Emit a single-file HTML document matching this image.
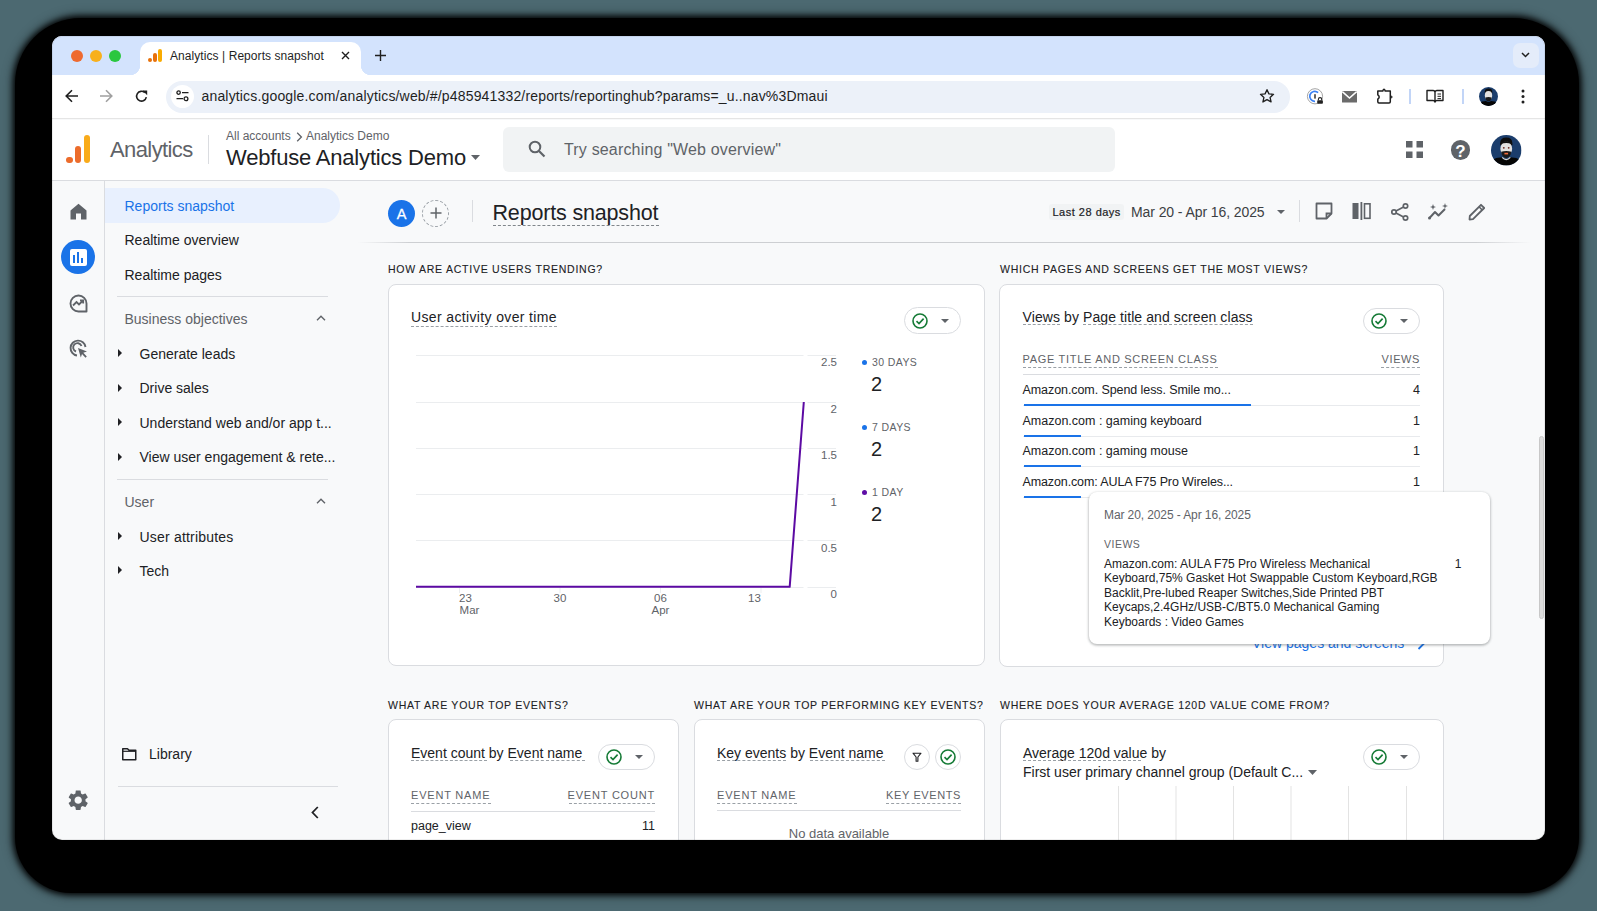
<!DOCTYPE html>
<html><head><meta charset="utf-8">
<style>
*{box-sizing:border-box;margin:0;padding:0}
html,body{width:1597px;height:911px;overflow:hidden;background:#4c6971;font-family:"Liberation Sans",sans-serif;color:#202124}
.a{position:absolute}
#shadow{position:absolute;left:15px;top:18px;width:1564px;height:874.5px;background:#000;border-radius:66px 66px 56px 56px;box-shadow:0 0 6px 2px #000,0 0 12px 3px rgba(0,0,0,.3)}
#win{position:absolute;left:0;top:0;width:1597px;height:911px;clip-path:inset(36px 52px 71px 52px round 10px);background:#f8f9fa}
.t{position:absolute;white-space:nowrap;line-height:1}
svg{position:absolute;overflow:visible}
</style></head><body>
<div id="shadow"></div>
<div id="win">
  <!-- ===== tab strip ===== -->
  <div class="a" style="left:52px;top:36px;width:1493px;height:39px;background:#d3e3fd"></div>
  <div class="a" style="left:71px;top:49.5px;width:12px;height:12px;border-radius:50%;background:#ee6a30"></div>
  <div class="a" style="left:90px;top:49.5px;width:12px;height:12px;border-radius:50%;background:#f8b01d"></div>
  <div class="a" style="left:109px;top:49.5px;width:12px;height:12px;border-radius:50%;background:#2ac73f"></div>
  <!-- active tab -->
  <div class="a" style="left:140px;top:42px;width:221px;height:34px;background:#fff;border-radius:10px 10px 0 0"></div>
  <div class="a" style="left:130px;top:64.5px;width:10px;height:10px;background:radial-gradient(circle at 0 0,#d3e3fd 10px,#fff 10.5px)"></div>
  <div class="a" style="left:361px;top:64.5px;width:10px;height:10px;background:radial-gradient(circle at 100% 0,#d3e3fd 10px,#fff 10.5px)"></div>
  <!-- favicon -->
  <div class="a" style="left:148px;top:58px;width:4px;height:4px;border-radius:50%;background:#e8710a"></div>
  <div class="a" style="left:152.5px;top:53px;width:4px;height:9px;border-radius:2px;background:#e8710a"></div>
  <div class="a" style="left:157.5px;top:48.5px;width:4px;height:13.5px;border-radius:2px;background:#f9ab00"></div>
  <div class="t" style="left:170px;top:50px;font-size:12px;letter-spacing:0.07px;color:#1f1f1f">Analytics | Reports snapshot</div>
  <svg style="left:341px;top:51px" width="9" height="9" viewBox="0 0 9 9"><path d="M1 1L8 8M8 1L1 8" stroke="#1f1f1f" stroke-width="1.4"/></svg>
  <svg style="left:374.5px;top:49.5px" width="11" height="11" viewBox="0 0 11 11"><path d="M5.5 0V11M0 5.5H11" stroke="#1f1f1f" stroke-width="1.4"/></svg>
  <div class="a" style="left:1512.5px;top:43px;width:26px;height:25px;border-radius:7px;background:#e4ecfa"></div>
  <svg style="left:1521px;top:52px" width="9" height="6" viewBox="0 0 9 6"><path d="M1 1L4.5 4.5L8 1" stroke="#1f1f1f" stroke-width="1.5" fill="none"/></svg>

  <!-- ===== toolbar ===== -->
  <div class="a" style="left:52px;top:75px;width:1493px;height:44px;background:#fff;border-bottom:1px solid #e5e5e5"></div>
  <!-- back -->
  <svg style="left:65px;top:89px" width="14" height="14" viewBox="0 0 14 14"><path d="M13 7H1.5M7 1.2L1.2 7L7 12.8" stroke="#1f1f1f" stroke-width="1.6" fill="none"/></svg>
  <svg style="left:99px;top:89px" width="14" height="14" viewBox="0 0 14 14"><path d="M1 7H12.5M7 1.2L12.8 7L7 12.8" stroke="#a0a0a0" stroke-width="1.6" fill="none"/></svg>
  <svg style="left:135px;top:90px" width="13" height="13" viewBox="0 0 13 13"><path d="M11.3 7.2A4.9 4.9 0 1 1 9.8 2.6" stroke="#1f1f1f" stroke-width="1.6" fill="none"/><path d="M7.6 0.6L12.2 0.6L12.2 5.2Z" fill="#1f1f1f"/></svg>
  <!-- omnibox -->
  <div class="a" style="left:166px;top:81px;width:1124px;height:31.5px;border-radius:16px;background:#ecf1f9"></div>
  <div class="a" style="left:170.5px;top:85px;width:23px;height:23px;border-radius:50%;background:#fff"></div>
  <svg style="left:176px;top:90px" width="13" height="12" viewBox="0 0 13 12"><circle cx="2.6" cy="2.6" r="1.7" stroke="#1f1f1f" stroke-width="1.3" fill="none"/><path d="M6 2.6H12.5M0.5 8.6H7" stroke="#1f1f1f" stroke-width="1.3"/><circle cx="10" cy="8.8" r="1.9" stroke="#1f1f1f" stroke-width="1.3" fill="none"/></svg>
  <div class="t" style="left:201.5px;top:89px;font-size:14px;letter-spacing:0.165px;color:#1f1f1f">analytics.google.com/analytics/web/#/p485941332/reports/reportinghub?params=_u..nav%3Dmaui</div>
  <!-- star -->
  <svg style="left:1259px;top:88px" width="16" height="16" viewBox="0 0 24 24"><path d="M12 2.5l2.9 6.3 6.9.7-5.2 4.6 1.5 6.8L12 17.4l-6.1 3.5 1.5-6.8L2.2 9.5l6.9-.7z" stroke="#1f1f1f" stroke-width="2" fill="none" stroke-linejoin="round"/></svg>
  <!-- ext icons -->
  <svg style="left:1306px;top:87px" width="20" height="20" viewBox="0 0 20 20"><circle cx="9" cy="9.3" r="7.6" stroke="#9a9a9a" stroke-width="0.9" fill="none"/><path d="M12.1 5.6A5 5 0 1 0 9 14.3" stroke="#3b82f6" stroke-width="1.7" fill="none"/><rect x="8.3" y="7.2" width="1.4" height="4.4" fill="#222"/><rect x="11.2" y="13.2" width="5.7" height="3.6" rx="0.8" fill="#222"/><path d="M12.4 13.3V12.3a1.65 1.65 0 0 1 3.3 0v1" stroke="#222" stroke-width="1.1" fill="none"/></svg>
  <svg style="left:1342px;top:90.5px" width="15" height="11.5" viewBox="0 0 15 11.5"><rect x="0" y="0" width="15" height="11.5" rx="0.6" fill="#6b6b6b"/><path d="M0.3 0.6L7.5 7L14.7 0.6" stroke="#fff" stroke-width="1.5" fill="none"/></svg>
  <svg style="left:1376px;top:87.5px" width="18" height="16" viewBox="0 0 18 16"><path d="M1.8 3H6.8Q7.2 1.4 8 1.2Q8.8 1.4 9.2 3H14.3V13.8Q14.3 15 13.1 15H3Q1.8 15 1.8 13.8V11.2Q3.2 10.2 3.2 9Q3.2 7.8 1.8 6.8Z" stroke="#1f1f1f" stroke-width="1.5" fill="none" stroke-linejoin="round"/><path d="M15.1 7.3L16.8 9L15.1 10.7Z" fill="#1f1f1f"/></svg>
  <div class="a" style="left:1409px;top:89px;width:1.5px;height:15px;background:#c2d5f7"></div>
  <svg style="left:1426px;top:89px" width="18" height="14" viewBox="0 0 18 14"><path d="M1 1.5H7a2 2 0 0 1 2 2V13a2 2 0 0 0-2-1.5H1ZM17 1.5H11a2 2 0 0 0-2 2V13a2 2 0 0 1 2-1.5H17Z" stroke="#1f1f1f" stroke-width="1.4" fill="none" stroke-linejoin="round"/><path d="M11.5 5H15M11.5 7.3H15M11.5 9.6H15" stroke="#1f1f1f" stroke-width="1"/></svg>
  <div class="a" style="left:1462px;top:89px;width:1.5px;height:15px;background:#c2d5f7"></div>
  <svg style="left:1479px;top:87px" width="19" height="19" viewBox="0 0 30 30"><defs><clipPath id="av2"><circle cx="15" cy="15" r="15"/></clipPath></defs><g clip-path="url(#av2)"><rect width="30" height="30" fill="#1b3d6c"/><path d="M9 8Q9 2.5 15 2.5Q21 2.5 21 8V10H9Z" fill="#0d0d0d"/><ellipse cx="15" cy="13.5" rx="5.8" ry="7" fill="#e4e2e0"/><path d="M10 16.5Q15 15 20 16.5Q19.5 22 15 22.5Q10.5 22 10 16.5Z" fill="#1a1a1a"/><path d="M0 25Q5 22 11 22Q15 25.5 19 22Q25 22 30 25V30H0Z" fill="#050505"/></g></svg>
  <svg style="left:1521px;top:89px" width="4" height="15" viewBox="0 0 4 15"><circle cx="2" cy="2" r="1.5" fill="#1f1f1f"/><circle cx="2" cy="7.5" r="1.5" fill="#1f1f1f"/><circle cx="2" cy="13" r="1.5" fill="#1f1f1f"/></svg>

  <!-- ===== GA header ===== -->
  <div class="a" style="left:52px;top:120px;width:1493px;height:61px;background:#fff;border-bottom:1px solid #dadce0"></div>

  <!-- GA logo -->
  <div class="a" style="left:66.2px;top:156.6px;width:6.8px;height:6.8px;border-radius:50%;background:#ec6c2b"></div>
  <div class="a" style="left:75px;top:146px;width:6.4px;height:17.2px;border-radius:3.2px;background:#ec6c2b"></div>
  <div class="a" style="left:83.9px;top:135px;width:6.5px;height:28.2px;border-radius:3.25px;background:#f9ab1a"></div>
  <div class="t" style="left:110px;top:139px;font-size:22px;letter-spacing:-0.6px;color:#5f6368">Analytics</div>
  <div class="a" style="left:208px;top:135px;width:1px;height:29px;background:#dadce0"></div>
  <div class="t" style="left:226px;top:129.5px;font-size:12px;color:#5f6368">All accounts</div>
  <svg style="left:296px;top:132px" width="7" height="10" viewBox="0 0 7 10"><path d="M1.2 0.8L5.4 5L1.2 9.2" stroke="#5f6368" stroke-width="1.3" fill="none"/></svg>
  <div class="t" style="left:306px;top:129.5px;font-size:12px;color:#5f6368">Analytics Demo</div>
  <div class="t" style="left:226px;top:146.8px;font-size:22px;letter-spacing:-0.19px;color:#202124">Webfuse Analytics Demo</div>
  <svg style="left:470.5px;top:155px" width="9" height="5" viewBox="0 0 9 5"><path d="M0 0H9L4.5 5Z" fill="#5f6368"/></svg>
  <!-- search -->
  <div class="a" style="left:503px;top:127px;width:612px;height:45px;border-radius:6px;background:#f1f3f4"></div>
  <svg style="left:528px;top:140px" width="18" height="18" viewBox="0 0 18 18"><circle cx="7" cy="7" r="5.3" stroke="#5f6368" stroke-width="2" fill="none"/><path d="M11 11L16.5 16.5" stroke="#5f6368" stroke-width="2.2"/></svg>
  <div class="t" style="left:564px;top:141.5px;font-size:16px;letter-spacing:0.17px;color:#5f6368">Try searching "Web overview"</div>
  <!-- apps -->
  <svg style="left:1406px;top:141px" width="17" height="17" viewBox="0 0 17 17"><rect x="0" y="0" width="6.5" height="6.5" fill="#5f6368"/><rect x="10.5" y="0" width="6.5" height="6.5" fill="#5f6368"/><rect x="0" y="10.5" width="6.5" height="6.5" fill="#5f6368"/><rect x="10.5" y="10.5" width="6.5" height="6.5" fill="#5f6368"/></svg>
  <div class="a" style="left:1450.5px;top:140px;width:19.5px;height:19.5px;border-radius:50%;background:#5f6368"></div>
  <div class="t" style="left:1453.5px;top:142.5px;font-size:17px;font-weight:bold;color:#fff;width:14px;text-align:center">?</div>
  <svg style="left:1491px;top:134.5px" width="30.5" height="30.5" viewBox="0 0 30 30"><defs><clipPath id="av"><circle cx="15" cy="15" r="15"/></clipPath></defs><g clip-path="url(#av)"><rect width="30" height="30" fill="#1b3d6c"/><path d="M9 8Q9 2.5 15 2.5Q21 2.5 21 8V10H9Z" fill="#0d0d0d"/><ellipse cx="15" cy="13.5" rx="5.8" ry="7" fill="#e4e2e0"/><path d="M9.5 9Q15 6.5 20.5 9V7.5Q15 4.5 9.5 7.5Z" fill="#111"/><circle cx="12.6" cy="12.6" r="0.9" fill="#6b2a20"/><circle cx="17.4" cy="12.6" r="0.9" fill="#6b2a20"/><path d="M10 16.5Q15 15 20 16.5Q19.5 22 15 22.5Q10.5 22 10 16.5Z" fill="#1a1a1a"/><rect x="13.2" y="17.5" width="3.6" height="1.6" fill="#f26b3a"/><path d="M0 25Q5 22 11 22Q15 25.5 19 22Q25 22 30 25V30H0Z" fill="#050505"/><path d="M11 22Q15 26.5 19 22" stroke="#d8d8d8" stroke-width="1.2" fill="none"/></g></svg>

  <!-- ===== left rail ===== -->
  <div class="a" style="left:104px;top:181px;width:1px;height:660px;background:#dadce0"></div>
  <svg style="left:69.5px;top:203px" width="17" height="17" viewBox="0 0 17 17"><path d="M0.5 7.5L8.5 0.8L16.5 7.5V16.5H11V10.5H6V16.5H0.5Z" fill="#5f6368"/></svg>
  <div class="a" style="left:60.5px;top:240px;width:34px;height:34px;border-radius:50%;background:#1a73e8"></div>
  <div class="a" style="left:69.5px;top:248.5px;width:17px;height:17px;border-radius:2px;background:#fff"></div>
  <div class="a" style="left:72.5px;top:255px;width:2px;height:7.5px;background:#1a73e8"></div>
  <div class="a" style="left:76.5px;top:252px;width:2px;height:10.5px;background:#1a73e8"></div>
  <div class="a" style="left:80.5px;top:257.5px;width:2px;height:5px;background:#1a73e8"></div>
  <svg style="left:68.5px;top:293.5px" width="19" height="19" viewBox="0 0 19 19"><path d="M17.5 9.5A8 8 0 1 0 9.5 17.5H17.5Z" stroke="#5f6368" stroke-width="1.9" fill="none" stroke-linejoin="round"/><path d="M4 11.5L7.5 8L10 10.5L14 6.5M11 6.3H14.2V9.5" stroke="#5f6368" stroke-width="1.8" fill="none"/></svg>
  <svg style="left:68.5px;top:339px" width="19" height="19" viewBox="0 0 19 19"><path d="M16.5 8A7.5 7.5 0 1 0 8 16.5" stroke="#5f6368" stroke-width="1.9" fill="none"/><path d="M12.5 7A4.3 4.3 0 1 0 7 12.5" stroke="#5f6368" stroke-width="1.9" fill="none"/><path d="M9 9L18 12.5L14.3 13.8L17.8 17.6L16.5 18.8L13 15L11.8 18.5Z" fill="#5f6368"/></svg>
  <svg style="left:66.1px;top:787.6px" width="24.4" height="24.4" viewBox="0 0 24 24"><path fill="#5f6368" d="M19.14 12.94c.04-.3.06-.61.06-.94 0-.32-.02-.64-.07-.94l2.03-1.58a.49.49 0 0 0 .12-.61l-1.92-3.32a.488.488 0 0 0-.59-.22l-2.39.96c-.5-.38-1.03-.7-1.62-.94l-.36-2.54a.484.484 0 0 0-.48-.41h-3.84c-.24 0-.43.17-.47.41l-.36 2.54c-.59.24-1.13.57-1.62.94l-2.39-.96c-.22-.08-.47 0-.59.22L2.74 8.87c-.12.21-.08.47.12.61l2.03 1.58c-.05.3-.09.63-.09.94s.02.64.07.94l-2.03 1.58a.49.49 0 0 0-.12.61l1.92 3.32c.12.22.37.29.59.22l2.39-.96c.5.38 1.03.7 1.62.94l.36 2.54c.05.24.24.41.48.41h3.84c.24 0 .44-.17.47-.41l.36-2.54c.59-.24 1.13-.56 1.62-.94l2.39.96c.22.08.47 0 .59-.22l1.92-3.32c.12-.22.07-.47-.12-.61l-2.01-1.58zM12 15.6c-1.98 0-3.6-1.62-3.6-3.6s1.62-3.6 3.6-3.6 3.6 1.62 3.6 3.6-1.62 3.6-3.6 3.6z"/></svg>

  <!-- ===== nav ===== -->
  <div class="a" style="left:105px;top:188px;width:235px;height:34.6px;border-radius:0 17.3px 17.3px 0;background:#e8f0fe"></div>
  <div class="t" style="left:124.5px;top:198.5px;font-size:14px;color:#1a73e8">Reports snapshot</div>
  <div class="t" style="left:124.5px;top:233px;font-size:14px;color:#202124">Realtime overview</div>
  <div class="t" style="left:124.5px;top:267.5px;font-size:14px;color:#202124">Realtime pages</div>
  <div class="a" style="left:117px;top:296px;width:211px;height:1px;background:#dadce0"></div>
  <div class="t" style="left:124.5px;top:312px;font-size:14px;color:#5f6368">Business objectives</div>
  <svg style="left:315.5px;top:315px" width="10" height="6" viewBox="0 0 10 6"><path d="M1 5.2L5 1.2L9 5.2" stroke="#5f6368" stroke-width="1.4" fill="none"/></svg>
  <svg style="left:118px;top:349px" width="4" height="8" viewBox="0 0 4 8"><path d="M0 0L4 4L0 8Z" fill="#202124"/></svg>
  <div class="t" style="left:139.5px;top:346.5px;font-size:14px;color:#202124">Generate leads</div>
  <svg style="left:118px;top:383.5px" width="4" height="8" viewBox="0 0 4 8"><path d="M0 0L4 4L0 8Z" fill="#202124"/></svg>
  <div class="t" style="left:139.5px;top:381px;font-size:14px;color:#202124">Drive sales</div>
  <svg style="left:118px;top:418px" width="4" height="8" viewBox="0 0 4 8"><path d="M0 0L4 4L0 8Z" fill="#202124"/></svg>
  <div class="t" style="left:139.5px;top:415.5px;font-size:14px;color:#202124">Understand web and/or app t...</div>
  <svg style="left:118px;top:452.5px" width="4" height="8" viewBox="0 0 4 8"><path d="M0 0L4 4L0 8Z" fill="#202124"/></svg>
  <div class="t" style="left:139.5px;top:450px;font-size:14px;color:#202124">View user engagement &amp; rete...</div>
  <div class="a" style="left:117px;top:479px;width:211px;height:1px;background:#dadce0"></div>
  <div class="t" style="left:124.5px;top:495px;font-size:14px;color:#5f6368">User</div>
  <svg style="left:315.5px;top:498px" width="10" height="6" viewBox="0 0 10 6"><path d="M1 5.2L5 1.2L9 5.2" stroke="#5f6368" stroke-width="1.4" fill="none"/></svg>
  <svg style="left:118px;top:532px" width="4" height="8" viewBox="0 0 4 8"><path d="M0 0L4 4L0 8Z" fill="#202124"/></svg>
  <div class="t" style="left:139.5px;top:529.5px;font-size:14px;letter-spacing:0.2px;color:#202124">User attributes</div>
  <svg style="left:118px;top:566px" width="4" height="8" viewBox="0 0 4 8"><path d="M0 0L4 4L0 8Z" fill="#202124"/></svg>
  <div class="t" style="left:139.5px;top:563.5px;font-size:14px;color:#202124">Tech</div>
  <svg style="left:122px;top:747.5px" width="14.5" height="12.5" viewBox="0 0 14.5 12.5"><path d="M0.75 0.75H5.5L7 2.3H13.75V11.75H0.75Z" stroke="#202124" stroke-width="1.5" fill="none" stroke-linejoin="round"/><path d="M0.75 3.3H13.75" stroke="#202124" stroke-width="1.2"/></svg>
  <div class="t" style="left:149px;top:747px;font-size:14px;color:#202124">Library</div>
  <div class="a" style="left:117.5px;top:786px;width:220px;height:1px;background:#dadce0"></div>
  <svg style="left:311px;top:805.5px" width="8" height="13" viewBox="0 0 8 13"><path d="M6.8 1L1.5 6.5L6.8 12" stroke="#202124" stroke-width="1.8" fill="none"/></svg>

  <!-- ===== report header ===== -->
  <div class="a" style="left:388px;top:199.5px;width:27px;height:27px;border-radius:50%;background:#1a73e8"></div>
  <div class="t" style="left:388px;top:207px;width:27px;text-align:center;font-size:14.5px;color:#fff;-webkit-text-stroke:0.3px #fff">A</div>
  <div class="a" style="left:422px;top:199.8px;width:27px;height:27px;border-radius:50%;border:1px dashed #9aa0a6"></div>
  <svg style="left:429.5px;top:207px" width="12" height="12" viewBox="0 0 12 12"><path d="M6 0.5V11.5M0.5 6H11.5" stroke="#5f6368" stroke-width="1.5"/></svg>
  <div class="a" style="left:472px;top:200px;width:1px;height:22px;background:#dadce0"></div>
  <div class="t" style="left:492.5px;top:202.5px;font-size:21.5px;letter-spacing:-0.17px;color:#202124">Reports snapshot</div>
  <div class="a" style="left:492.5px;top:225px;width:166px;height:1px;border-top:1.5px dashed #80868b"></div>
  <div class="a" style="left:1048.5px;top:204px;width:75.5px;height:15.5px;border-radius:3px;background:#f1f3f4"></div>
  <div class="t" style="left:1052.5px;top:207px;font-size:11px;letter-spacing:0.5px;color:#202124;-webkit-text-stroke:0.2px #202124">Last 28 days</div>
  <div class="t" style="left:1131px;top:205px;font-size:14px;letter-spacing:-0.09px;color:#3c4043">Mar 20 - Apr 16, 2025</div>
  <svg style="left:1277px;top:209.5px" width="8" height="4" viewBox="0 0 8 4"><path d="M0 0H8L4 4Z" fill="#5f6368"/></svg>
  <div class="a" style="left:1299px;top:200px;width:1px;height:22px;background:#dadce0"></div>
  <svg style="left:1314.5px;top:202px" width="18" height="18" viewBox="0 0 18 18"><path d="M1.5 1.5H16.5V11.5L11.5 16.5H1.5Z" stroke="#5f6368" stroke-width="1.8" fill="none" stroke-linejoin="round"/><path d="M16.5 11.5H11.5V16.5" stroke="#5f6368" stroke-width="1.8" fill="none"/></svg>
  <svg style="left:1352px;top:202px" width="19" height="18" viewBox="0 0 19 18"><rect x="0.5" y="1" width="6" height="16" fill="#5f6368"/><rect x="8.5" y="0" width="1.8" height="18" fill="#5f6368"/><rect x="12.5" y="1.8" width="5.5" height="14.5" stroke="#5f6368" stroke-width="1.6" fill="none"/></svg>
  <svg style="left:1391px;top:202.5px" width="18" height="18" viewBox="0 0 18 18"><circle cx="14.5" cy="3" r="2.2" stroke="#5f6368" stroke-width="1.7" fill="none"/><circle cx="3" cy="9" r="2.2" stroke="#5f6368" stroke-width="1.7" fill="none"/><circle cx="14.5" cy="15" r="2.2" stroke="#5f6368" stroke-width="1.7" fill="none"/><path d="M5 8L12.5 4M5 10L12.5 14" stroke="#5f6368" stroke-width="1.7"/></svg>
  <svg style="left:1428px;top:202.5px" width="21" height="17" viewBox="0 0 21 17"><path d="M1.5 15L7 9L10.5 12.5L17 6" stroke="#5f6368" stroke-width="2" fill="none" stroke-linejoin="round"/><circle cx="1.5" cy="15" r="1.5" fill="#5f6368"/><path d="M5 1L5.8 3.2L8 4L5.8 4.8L5 7L4.2 4.8L2 4L4.2 3.2Z" fill="#5f6368"/><path d="M17 0L17.7 2.3L20 3L17.7 3.7L17 6L16.3 3.7L14 3L16.3 2.3Z" fill="#5f6368"/></svg>
  <svg style="left:1467.5px;top:202.5px" width="18" height="18" viewBox="0 0 18 18"><path d="M1.5 16.5L1.8 13L13 1.8L16.2 5L5 16.2Z" stroke="#5f6368" stroke-width="1.8" fill="none" stroke-linejoin="round"/><path d="M11 3.8L14.2 7" stroke="#5f6368" stroke-width="1.6"/></svg>
  <div class="a" style="left:358px;top:242px;width:1173px;height:1px;background:linear-gradient(90deg,rgba(200,201,204,0) 0,#cdcfd2 4.4%,#cdcfd2 95.3%,rgba(200,201,204,0) 100%)"></div>
  <!-- scrollbar -->
  <div class="a" style="left:1538.5px;top:435.5px;width:5.5px;height:183px;border-radius:3px;background:#dcdcdc;border:1px solid #c8c8c8"></div>

  <!-- ===== section titles row 1 ===== -->
  <div class="t" style="left:388px;top:263.5px;font-size:11.5px;letter-spacing:0.8px;color:#202124;transform:scaleX(0.916);transform-origin:0 0;-webkit-text-stroke:0.1px #202124">HOW ARE ACTIVE USERS TRENDING?</div>
  <div class="t" style="left:1000px;top:263.5px;font-size:11.5px;letter-spacing:0.8px;color:#202124;transform:scaleX(0.916);transform-origin:0 0;-webkit-text-stroke:0.1px #202124">WHICH PAGES AND SCREENS GET THE MOST VIEWS?</div>
  <!-- card 1 -->
  <div class="a" style="left:387.5px;top:283.5px;width:597px;height:382.8px;border-radius:8px;border:1px solid #dadce0;background:#fff"></div>
  <div class="t" style="left:411px;top:309.5px;font-size:14px;letter-spacing:0.36px;color:#202124">User activity over time</div>
  <div class="a" style="left:411px;top:325.5px;width:146px;height:0;border-top:1.5px dashed #9aa0a6"></div>
  <div class="a" style="left:904px;top:307.3px;width:57px;height:26.5px;border-radius:14px;border:1px solid #dadce0;background:#fff"></div>
  <svg style="left:912px;top:312.8px" width="16" height="16" viewBox="0 0 16 16"><circle cx="8" cy="8" r="7" stroke="#147a35" stroke-width="1.6" fill="none"/><path d="M4.5 8.2L7 10.6L11.6 5.6" stroke="#147a35" stroke-width="1.6" fill="none"/></svg>
  <svg style="left:941px;top:318.8px" width="8" height="4" viewBox="0 0 8 4"><path d="M0 0H8L4 4Z" fill="#5f6368"/></svg>

  <svg style="left:0;top:0" width="1597" height="911" viewBox="0 0 1597 911">
    <g stroke="#ebedef" stroke-width="1">
      <path d="M416 355.5H803.5M807.5 355.5H836M416 402.5H803.5M807.5 402.5H836M416 448.5H803.5M807.5 448.5H836M416 494.5H803.5M807.5 494.5H836M416 540.5H803.5M807.5 540.5H836M416 587.5H803.5M807.5 587.5H836"/>
      <path d="M459.5 588V593M560 588V593M660.5 588V593M761 588V593"/>
    </g>
    <path d="M416 586.8H789.7L803.8 402" stroke="#5c0aa3" stroke-width="2" fill="none" stroke-linejoin="round"/>
  </svg>
  <div class="t" style="left:797px;top:357px;width:40px;text-align:right;font-size:11.5px;color:#5f6368">2.5</div>
  <div class="t" style="left:797px;top:404px;width:40px;text-align:right;font-size:11.5px;color:#5f6368">2</div>
  <div class="t" style="left:797px;top:450px;width:40px;text-align:right;font-size:11.5px;color:#5f6368">1.5</div>
  <div class="t" style="left:797px;top:496.5px;width:40px;text-align:right;font-size:11.5px;color:#5f6368">1</div>
  <div class="t" style="left:797px;top:542.5px;width:40px;text-align:right;font-size:11.5px;color:#5f6368">0.5</div>
  <div class="t" style="left:797px;top:589px;width:40px;text-align:right;font-size:11.5px;color:#5f6368">0</div>
  <div class="t" style="left:445px;top:593px;width:41px;text-align:center;font-size:11.5px;color:#5f6368">23</div>
  <div class="t" style="left:449px;top:604.5px;width:41px;text-align:center;font-size:11.5px;color:#5f6368">Mar</div>
  <div class="t" style="left:539.5px;top:593px;width:41px;text-align:center;font-size:11.5px;color:#5f6368">30</div>
  <div class="t" style="left:640px;top:593px;width:41px;text-align:center;font-size:11.5px;color:#5f6368">06</div>
  <div class="t" style="left:640px;top:604.5px;width:41px;text-align:center;font-size:11.5px;color:#5f6368">Apr</div>
  <div class="t" style="left:734px;top:593px;width:41px;text-align:center;font-size:11.5px;color:#5f6368">13</div>
  <!-- legend -->
  <div class="a" style="left:862px;top:360px;width:5px;height:5px;border-radius:50%;background:#1a73e8"></div>
  <div class="t" style="left:872px;top:357px;font-size:10.5px;letter-spacing:0.4px;color:#5f6368">30 DAYS</div>
  <div class="t" style="left:871px;top:374px;font-size:20px;color:#202124">2</div>
  <div class="a" style="left:862px;top:425px;width:5px;height:5px;border-radius:50%;background:#1a73e8"></div>
  <div class="t" style="left:872px;top:422px;font-size:10.5px;letter-spacing:0.4px;color:#5f6368">7 DAYS</div>
  <div class="t" style="left:871px;top:439px;font-size:20px;color:#202124">2</div>
  <div class="a" style="left:862px;top:490px;width:5px;height:5px;border-radius:50%;background:#5e0ea6"></div>
  <div class="t" style="left:872px;top:487px;font-size:10.5px;letter-spacing:0.4px;color:#5f6368">1 DAY</div>
  <div class="t" style="left:871px;top:504px;font-size:20px;color:#202124">2</div>

  <!-- card 2 -->
  <div class="a" style="left:999px;top:283.8px;width:444.5px;height:383px;border-radius:8px;border:1px solid #dadce0;background:#fff"></div>
  <div class="t" style="left:1022.5px;top:309.5px;font-size:14px;letter-spacing:0.09px;color:#202124">Views by Page title and screen class</div>
  <div class="a" style="left:1022.5px;top:324px;width:37px;height:0;border-top:1.5px dashed #9aa0a6"></div>
  <div class="a" style="left:1083px;top:324px;width:170px;height:0;border-top:1.5px dashed #9aa0a6"></div>
  <div class="a" style="left:1363px;top:307.7px;width:57px;height:26.5px;border-radius:14px;border:1px solid #dadce0;background:#fff"></div>
  <svg style="left:1371px;top:313.2px" width="16" height="16" viewBox="0 0 16 16"><circle cx="8" cy="8" r="7" stroke="#147a35" stroke-width="1.6" fill="none"/><path d="M4.5 8.2L7 10.6L11.6 5.6" stroke="#147a35" stroke-width="1.6" fill="none"/></svg>
  <svg style="left:1400px;top:319.2px" width="8" height="4" viewBox="0 0 8 4"><path d="M0 0H8L4 4Z" fill="#5f6368"/></svg>

  <div class="t" style="left:1022.5px;top:353.5px;font-size:11px;letter-spacing:0.7px;color:#5f6368">PAGE TITLE AND SCREEN CLASS</div>
  <div class="a" style="left:1022.5px;top:367px;width:195px;height:0;border-top:1px dashed #9aa0a6"></div>
  <div class="t" style="left:1360px;top:353.5px;width:60px;text-align:right;font-size:11px;letter-spacing:0.6px;color:#5f6368">VIEWS</div>
  <div class="a" style="left:1381px;top:367px;width:38.5px;height:0;border-top:1px dashed #9aa0a6"></div>
  <div class="a" style="left:1022.5px;top:374px;width:397px;height:1px;background:#dadce0"></div>
  <div class="t" style="left:1022.5px;top:383.5px;font-size:12.5px;letter-spacing:-0.08px;color:#202124">Amazon.com. Spend less. Smile mo...</div>
  <div class="t" style="left:1380px;top:383.5px;width:40px;text-align:right;font-size:12.5px;color:#202124">4</div>
  <div class="a" style="left:1022.5px;top:405px;width:397px;height:1px;background:#e8eaed"></div>
  <div class="a" style="left:1023.5px;top:403.8px;width:227px;height:2px;background:#1a73e8"></div>
  <div class="t" style="left:1022.5px;top:414.5px;font-size:12.5px;color:#202124">Amazon.com : gaming keyboard</div>
  <div class="t" style="left:1380px;top:414.5px;width:40px;text-align:right;font-size:12.5px;color:#202124">1</div>
  <div class="a" style="left:1022.5px;top:435.8px;width:397px;height:1px;background:#e8eaed"></div>
  <div class="a" style="left:1023.5px;top:434.5px;width:57px;height:2px;background:#1a73e8"></div>
  <div class="t" style="left:1022.5px;top:445px;font-size:12.5px;color:#202124">Amazon.com : gaming mouse</div>
  <div class="t" style="left:1380px;top:445px;width:40px;text-align:right;font-size:12.5px;color:#202124">1</div>
  <div class="a" style="left:1022.5px;top:466.3px;width:397px;height:1px;background:#e8eaed"></div>
  <div class="a" style="left:1023.5px;top:465px;width:57px;height:2px;background:#1a73e8"></div>
  <div class="t" style="left:1022.5px;top:475.5px;font-size:12.5px;letter-spacing:-0.12px;color:#202124">Amazon.com: AULA F75 Pro Wireles...</div>
  <div class="t" style="left:1380px;top:475.5px;width:40px;text-align:right;font-size:12.5px;color:#202124">1</div>
  <div class="a" style="left:1022.5px;top:497px;width:397px;height:1px;background:#e8eaed"></div>
  <div class="a" style="left:1023.5px;top:496px;width:57px;height:2px;background:#1a73e8"></div>
  <div class="t" style="left:1252px;top:636px;font-size:14px;color:#1a73e8">View pages and screens</div>
  <svg style="left:1417px;top:637.5px" width="8" height="12" viewBox="0 0 8 12"><path d="M1.5 1L6.5 6L1.5 11" stroke="#1a73e8" stroke-width="1.8" fill="none"/></svg>
  <!-- tooltip -->
  <div class="a" style="left:1088.7px;top:492.4px;width:401.6px;height:151.2px;border-radius:8px;background:#fff;box-shadow:0 1px 3px rgba(60,64,67,.3),0 1px 2px 1px rgba(60,64,67,.12)"></div>
  <div class="t" style="left:1104px;top:509px;font-size:12px;letter-spacing:-0.1px;color:#5f6368">Mar 20, 2025 - Apr 16, 2025</div>
  <div class="t" style="left:1104px;top:538.5px;font-size:10.5px;letter-spacing:0.5px;color:#5f6368">VIEWS</div>
  <div class="a" style="left:1104px;top:557px;width:345px;font-size:12px;line-height:14.4px;color:#202124;white-space:nowrap">Amazon.com: AULA F75 Pro Wireless Mechanical<br>Keyboard,75% Gasket Hot Swappable Custom Keyboard,RGB<br>Backlit,Pre-lubed Reaper Switches,Side Printed PBT<br>Keycaps,2.4GHz/USB-C/BT5.0 Mechanical Gaming<br>Keyboards : Video Games</div>
  <div class="t" style="left:1441.5px;top:558px;width:20px;text-align:right;font-size:12px;color:#202124">1</div>

  <!-- ===== section titles row 2 ===== -->
  <div class="t" style="left:388px;top:699.5px;font-size:11.5px;letter-spacing:0.8px;color:#202124;transform:scaleX(0.916);transform-origin:0 0;-webkit-text-stroke:0.1px #202124">WHAT ARE YOUR TOP EVENTS?</div>
  <div class="t" style="left:694px;top:699.5px;font-size:11.5px;letter-spacing:0.8px;color:#202124;transform:scaleX(0.916);transform-origin:0 0;-webkit-text-stroke:0.1px #202124">WHAT ARE YOUR TOP PERFORMING KEY EVENTS?</div>
  <div class="t" style="left:1000px;top:699.5px;font-size:11.5px;letter-spacing:0.8px;color:#202124;transform:scaleX(0.916);transform-origin:0 0;-webkit-text-stroke:0.1px #202124">WHERE DOES YOUR AVERAGE 120D VALUE COME FROM?</div>
  <!-- card 3 -->
  <div class="a" style="left:387.5px;top:719.2px;width:291px;height:200px;border-radius:8px;border:1px solid #dadce0;background:#fff"></div>
  <div class="t" style="left:411px;top:746px;font-size:14px;color:#202124">Event count by Event name</div>
  <div class="a" style="left:411px;top:759.5px;width:76px;height:0;border-top:1.5px dashed #9aa0a6"></div>
  <div class="a" style="left:510px;top:759.5px;width:75px;height:0;border-top:1.5px dashed #9aa0a6"></div>
  <div class="a" style="left:598.4px;top:743.5px;width:57px;height:26.5px;border-radius:14px;border:1px solid #dadce0;background:#fff"></div>
  <svg style="left:606.4px;top:749.0px" width="16" height="16" viewBox="0 0 16 16"><circle cx="8" cy="8" r="7" stroke="#147a35" stroke-width="1.6" fill="none"/><path d="M4.5 8.2L7 10.6L11.6 5.6" stroke="#147a35" stroke-width="1.6" fill="none"/></svg>
  <svg style="left:635.4px;top:755.0px" width="8" height="4" viewBox="0 0 8 4"><path d="M0 0H8L4 4Z" fill="#5f6368"/></svg>

  <div class="t" style="left:411px;top:789.5px;font-size:11px;letter-spacing:0.8px;color:#5f6368">EVENT NAME</div>
  <div class="a" style="left:411px;top:803px;width:80px;height:0;border-top:1px dashed #9aa0a6"></div>
  <div class="t" style="left:540px;top:789.5px;width:115px;text-align:right;font-size:11px;letter-spacing:0.8px;color:#5f6368">EVENT COUNT</div>
  <div class="a" style="left:569px;top:803px;width:86px;height:0;border-top:1px dashed #9aa0a6"></div>
  <div class="a" style="left:411px;top:810.5px;width:244px;height:1px;background:#dadce0"></div>
  <div class="t" style="left:411px;top:820px;font-size:12.5px;color:#202124">page_view</div>
  <div class="t" style="left:615px;top:820px;width:40px;text-align:right;font-size:12.5px;color:#202124">11</div>
  <!-- card 4 -->
  <div class="a" style="left:693.5px;top:719.2px;width:291px;height:200px;border-radius:8px;border:1px solid #dadce0;background:#fff"></div>
  <div class="t" style="left:717px;top:746px;font-size:14px;color:#202124">Key events by Event name</div>
  <div class="a" style="left:717px;top:759.5px;width:69px;height:0;border-top:1.5px dashed #9aa0a6"></div>
  <div class="a" style="left:810px;top:759.5px;width:75px;height:0;border-top:1.5px dashed #9aa0a6"></div>
  <div class="a" style="left:904.3px;top:743.5px;width:26px;height:26px;border-radius:50%;border:1px solid #dadce0;background:#fff"></div>
  <svg style="left:912.3px;top:751.5px" width="10" height="10" viewBox="0 0 10 10"><path d="M1 1.2H9L5.9 5V9.2H4.1V5Z" stroke="#202124" stroke-width="1.1" fill="none" stroke-linejoin="round"/></svg>
  <div class="a" style="left:934.9px;top:743.5px;width:26px;height:26px;border-radius:50%;border:1px solid #dadce0;background:#fff"></div>
  <svg style="left:940px;top:748.5px" width="16" height="16" viewBox="0 0 16 16"><circle cx="8" cy="8" r="7" stroke="#147a35" stroke-width="1.6" fill="none"/><path d="M4.5 8.2L7 10.6L11.6 5.6" stroke="#147a35" stroke-width="1.6" fill="none"/></svg>
  <div class="t" style="left:717px;top:789.5px;font-size:11px;letter-spacing:0.8px;color:#5f6368">EVENT NAME</div>
  <div class="a" style="left:717px;top:803px;width:80px;height:0;border-top:1px dashed #9aa0a6"></div>
  <div class="t" style="left:846px;top:789.5px;width:115px;text-align:right;font-size:11px;letter-spacing:0.6px;color:#5f6368">KEY EVENTS</div>
  <div class="a" style="left:886px;top:803px;width:75px;height:0;border-top:1px dashed #9aa0a6"></div>
  <div class="a" style="left:717px;top:810px;width:244px;height:1px;background:#dadce0"></div>
  <div class="t" style="left:739px;top:827px;width:200px;text-align:center;font-size:13px;color:#5f6368">No data available</div>
  <!-- card 5 -->
  <div class="a" style="left:999.5px;top:719.2px;width:444px;height:200px;border-radius:8px;border:1px solid #dadce0;background:#fff"></div>
  <div class="t" style="left:1023px;top:746px;font-size:14px;color:#202124">Average 120d value by</div>
  <div class="a" style="left:1023px;top:759.5px;width:118px;height:0;border-top:1.5px dashed #9aa0a6"></div>
  <div class="t" style="left:1023px;top:765px;font-size:14px;color:#202124">First user primary channel group (Default C...</div>
  <svg style="left:1307.5px;top:769.5px" width="9" height="5" viewBox="0 0 9 5"><path d="M0 0H9L4.5 5Z" fill="#5f6368"/></svg>
  <div class="a" style="left:1363.4px;top:743.6px;width:57px;height:26.5px;border-radius:14px;border:1px solid #dadce0;background:#fff"></div>
  <svg style="left:1371.4px;top:749.1px" width="16" height="16" viewBox="0 0 16 16"><circle cx="8" cy="8" r="7" stroke="#147a35" stroke-width="1.6" fill="none"/><path d="M4.5 8.2L7 10.6L11.6 5.6" stroke="#147a35" stroke-width="1.6" fill="none"/></svg>
  <svg style="left:1400.4px;top:755.1px" width="8" height="4" viewBox="0 0 8 4"><path d="M0 0H8L4 4Z" fill="#5f6368"/></svg>

  <svg style="left:0;top:0" width="1597" height="911" viewBox="0 0 1597 911"><path d="M1118.5 786V841M1176 786V841M1233.5 786V841M1291 786V841M1348.5 786V841M1406.5 786V841" stroke="#e3e3e3" stroke-width="1"/></svg>
  <div class="a" style="left:52px;top:36px;width:1493px;height:804px;border-radius:10px;border:1px solid rgba(0,0,0,0.07);pointer-events:none"></div>
</div>
</body></html>
